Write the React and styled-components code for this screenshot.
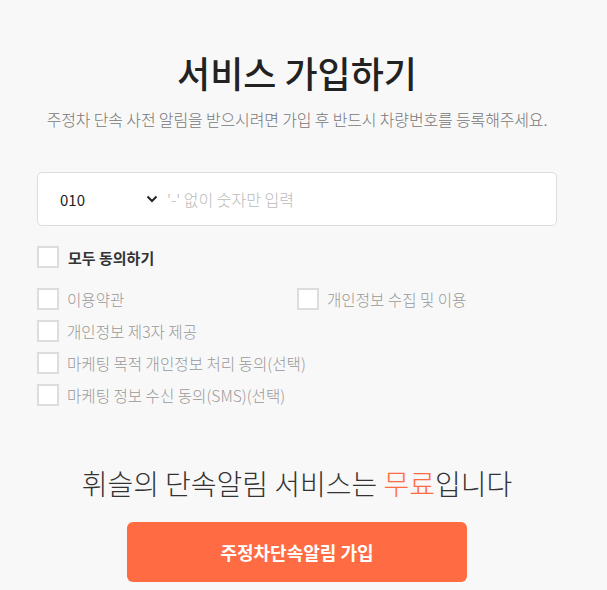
import React, { useState } from "react";
import styled, { createGlobalStyle } from "styled-components";

const GlobalStyle = createGlobalStyle`
  html, body {
    margin: 0;
    padding: 0;
    background: #f8f8f8;
  }
  body {
    font-family: "Noto Sans CJK KR", "Noto Sans", sans-serif;
    color: #333;
  }
  * { box-sizing: border-box; }
`;

const Page = styled.div`
  width: 594px;
  min-height: 590px;
  padding-top: 46px;
  display: flex;
  flex-direction: column;
  align-items: center;
`;

const Title = styled.h1`
  margin: 0;
  font-size: 36px;
  font-weight: 500;
  line-height: 52px;
  color: #222;
`;

const Subtitle = styled.p`
  margin: 10px 0 0;
  font-size: 16px;
  font-weight: 300;
  line-height: 22px;
  color: #777;
  letter-spacing: -0.15px;
`;

const Form = styled.div`
  width: 520px;
  margin-top: 42px;
`;

const PhoneBox = styled.div`
  height: 54px;
  background: #fff;
  border: 1px solid #ddd;
  border-radius: 5px;
  display: flex;
  align-items: center;
  padding-left: 22px;
`;

const SelectWrap = styled.div`
  position: relative;
  width: 107px;
  flex-shrink: 0;
`;

const Select = styled.select`
  appearance: none;
  border: none;
  background: transparent;
  width: 100%;
  font-family: inherit;
  font-size: 15px;
  color: #222;
  padding: 0;
  outline: none;
`;

const Chevron = styled.svg`
  position: absolute;
  right: 9px;
  top: 50%;
  transform: translateY(-50%);
  pointer-events: none;
`;

const PhoneInput = styled.input`
  flex: 1;
  border: none;
  background: transparent;
  font-family: inherit;
  font-size: 16px;
  font-weight: 300;
  color: #222;
  outline: none;
  padding: 0;
  &::placeholder { color: #bbb; }
`;

const AllRow = styled.label`
  display: flex;
  align-items: center;
  gap: 9px;
  margin-top: 20px;
  font-size: 15px;
  font-weight: 700;
  color: #333;
  cursor: pointer;
`;

const TermsGrid = styled.div`
  display: grid;
  grid-template-columns: 260px 260px;
  row-gap: 10px;
  margin-top: 20px;
`;

const TermRow = styled.label`
  display: flex;
  align-items: center;
  gap: 8px;
  height: 22px;
  font-size: 15.6px;
  font-weight: 300;
  color: #999;
  cursor: pointer;
  grid-column: ${(p) => (p.$full ? "1 / span 2" : "auto")};
`;

const Box = styled.span`
  width: 22px;
  height: 22px;
  flex-shrink: 0;
  background: #fff;
  border: 2px solid #ddd;
  display: flex;
  align-items: center;
  justify-content: center;
`;

const Hidden = styled.input`
  display: none;
`;

const Promo = styled.p`
  margin: 57px 0 0;
  font-size: 28px;
  font-weight: 300;
  line-height: 40px;
  color: #333;
`;

const Accent = styled.span`
  color: #ff6c44;
`;

const Submit = styled.button`
  margin-top: 19px;
  width: 340px;
  height: 60px;
  border: none;
  border-radius: 6px;
  background: #ff6c44;
  color: #fff;
  font-family: inherit;
  font-size: 18px;
  font-weight: 700;
  cursor: pointer;
`;

const Check = ({ checked }) => (
  <Box>
    {checked && (
      <svg width="12" height="12" viewBox="0 0 12 12">
        <path d="M2 6l3 3 5-6" fill="none" stroke="#ff6c44" strokeWidth="2" />
      </svg>
    )}
  </Box>
);

const terms = [
  { id: "tos", label: "이용약관" },
  { id: "privacy", label: "개인정보 수집 및 이용" },
  { id: "third", label: "개인정보 제3자 제공", full: true },
  { id: "mkt", label: "마케팅 목적 개인정보 처리 동의(선택)", full: true },
  { id: "sms", label: "마케팅 정보 수신 동의(SMS)(선택)", full: true },
];

export default function App() {
  const [agreed, setAgreed] = useState({});
  const allChecked = terms.every((t) => agreed[t.id]);

  const toggleAll = () => {
    const next = {};
    terms.forEach((t) => (next[t.id] = !allChecked));
    setAgreed(next);
  };

  return (
    <>
      <GlobalStyle />
      <Page>
        <Title>서비스 가입하기</Title>
        <Subtitle>주정차 단속 사전 알림을 받으시려면 가입 후 반드시 차량번호를 등록해주세요.</Subtitle>

        <Form>
          <PhoneBox>
            <SelectWrap>
              <Select defaultValue="010">
                <option>010</option>
                <option>011</option>
                <option>016</option>
                <option>017</option>
                <option>019</option>
              </Select>
              <Chevron width="12" height="8" viewBox="0 0 12 8">
                <path d="M1.5 1.5L6 6l4.5-4.5" fill="none" stroke="#222" strokeWidth="2" />
              </Chevron>
            </SelectWrap>
            <PhoneInput placeholder="'-' 없이 숫자만 입력" />
          </PhoneBox>

          <AllRow>
            <Hidden type="checkbox" checked={allChecked} onChange={toggleAll} />
            <Check checked={allChecked} />
            모두 동의하기
          </AllRow>

          <TermsGrid>
            {terms.map((t) => (
              <TermRow key={t.id} $full={t.full}>
                <Hidden
                  type="checkbox"
                  checked={!!agreed[t.id]}
                  onChange={() => setAgreed({ ...agreed, [t.id]: !agreed[t.id] })}
                />
                <Check checked={!!agreed[t.id]} />
                {t.label}
              </TermRow>
            ))}
          </TermsGrid>
        </Form>

        <Promo>
          휘슬의 단속알림 서비스는 <Accent>무료</Accent>입니다
        </Promo>
        <Submit>주정차단속알림 가입</Submit>
      </Page>
    </>
  );
}
